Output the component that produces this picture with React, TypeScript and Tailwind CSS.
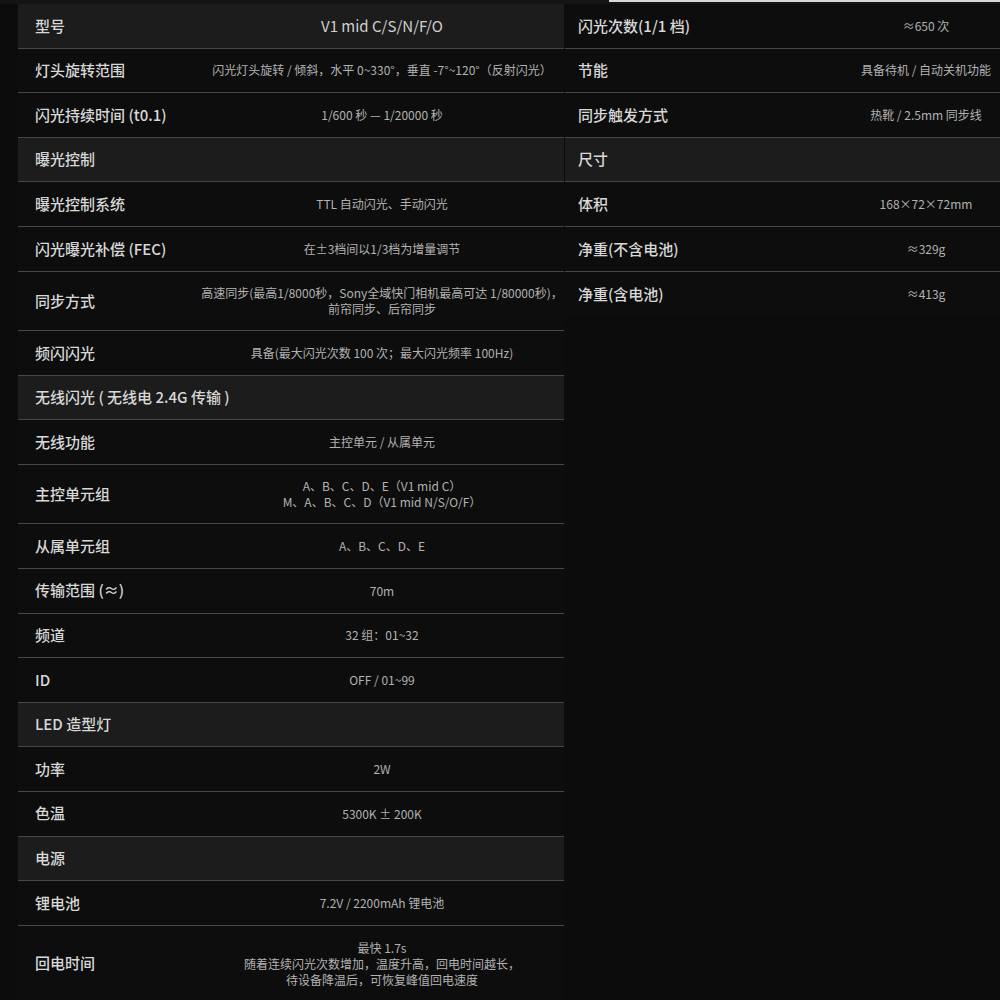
import React from "react";

type Row = {
  label: string;
  value?: string[];
  header?: boolean;
  h?: string;
  big?: boolean;
  noBorder?: boolean;
};

const leftRows: Row[] = [
  { label: "型号", value: ["V1 mid C/S/N/F/O"], header: true, big: true },
  { label: "灯头旋转范围", value: ["闪光灯头旋转 / 倾斜，水平 0~330°，垂直 -7°~120°（反射闪光）"] },
  { label: "闪光持续时间 (t0.1)", value: ["1/600 秒 — 1/20000 秒"] },
  { label: "曝光控制", header: true },
  { label: "曝光控制系统", value: ["TTL 自动闪光、手动闪光"] },
  { label: "闪光曝光补偿 (FEC)", value: ["在±3档间以1/3档为增量调节"] },
  {
    label: "同步方式",
    value: ["高速同步(最高1/8000秒，Sony全域快门相机最高可达 1/80000秒)，", "前帘同步、后帘同步"],
    h: "h-[59.5px]",
  },
  { label: "频闪闪光", value: ["具备(最大闪光次数 100 次；最大闪光频率 100Hz)"] },
  { label: "无线闪光 ( 无线电 2.4G 传输 )", header: true },
  { label: "无线功能", value: ["主控单元 / 从属单元"] },
  {
    label: "主控单元组",
    value: ["A、B、C、D、E（V1 mid C）", "M、A、B、C、D（V1 mid N/S/O/F）"],
    h: "h-[59.5px]",
  },
  { label: "从属单元组", value: ["A、B、C、D、E"] },
  { label: "传输范围 (≈)", value: ["70m"] },
  { label: "频道", value: ["32 组：01~32"] },
  { label: "ID", value: ["OFF / 01~99"] },
  { label: "LED 造型灯", header: true },
  { label: "功率", value: ["2W"] },
  { label: "色温", value: ["5300K ± 200K"] },
  { label: "电源", header: true },
  { label: "锂电池", value: ["7.2V / 2200mAh 锂电池"] },
  {
    label: "回电时间",
    value: ["最快 1.7s", "随着连续闪光次数增加，温度升高，回电时间越长，", "待设备降温后，可恢复峰值回电速度"],
    h: "h-[76px]",
    noBorder: true,
  },
];

const rightRows: Row[] = [
  { label: "闪光次数(1/1 档)", value: ["≈650 次"] },
  { label: "节能", value: ["具备待机 / 自动关机功能"] },
  { label: "同步触发方式", value: ["热靴 / 2.5mm 同步线"] },
  { label: "尺寸", header: true },
  { label: "体积", value: ["168×72×72mm"] },
  { label: "净重(不含电池)", value: ["≈329g"] },
  { label: "净重(含电池)", value: ["≈413g"], noBorder: true },
];

function RowView({ row, labelW, padL }: { row: Row; labelW: string; padL: string }) {
  return (
    <div
      className={[
        "flex items-center",
        row.h ?? "h-[44.6px]",
        row.noBorder ? "" : "border-b border-[#474747]",
        row.header ? "bg-[#1c1c1c]" : "bg-[#0d0d0d]",
      ].join(" ")}
    >
      <div className={`${labelW} ${padL} shrink-0 text-[15px] font-medium text-[#d8d8d8] whitespace-nowrap`}>
        {row.label}
      </div>
      {row.value && (
        <div className="flex-1 flex flex-col items-center justify-center">
          {row.value.map((v, i) => (
            <div
              key={i}
              className={
                row.big
                  ? "text-[15px] text-[#d0d0d0] whitespace-nowrap leading-[20px]"
                  : "text-[12px] text-[#b2b2b2] whitespace-nowrap leading-[16px]"
              }
            >
              {v}
            </div>
          ))}
        </div>
      )}
    </div>
  );
}

export default function App() {
  return (
    <div className="w-[1000px] h-[1000px] overflow-hidden bg-[#0c0c0c] font-['Noto_Sans_CJK_SC','Noto_Sans',sans-serif]">
      <div className="flex h-[4px] bg-[#141414]">
        <div className="w-[609px]" />
        <div className="flex-1 h-[2px] bg-[#d8d8d8]" />
      </div>
      <div className="flex pl-[18px]">
        <div className="w-[546px] shrink-0">
          {leftRows.map((r, i) => (
            <RowView key={i} row={r} labelW="w-[182px]" padL="pl-[17px]" />
          ))}
        </div>
        <div className="w-[542px] shrink-0 ml-[1px]">
          {rightRows.map((r, i) => (
            <RowView key={i} row={r} labelW="w-[180px]" padL="pl-[13px]" />
          ))}
        </div>
      </div>
    </div>
  );
}
